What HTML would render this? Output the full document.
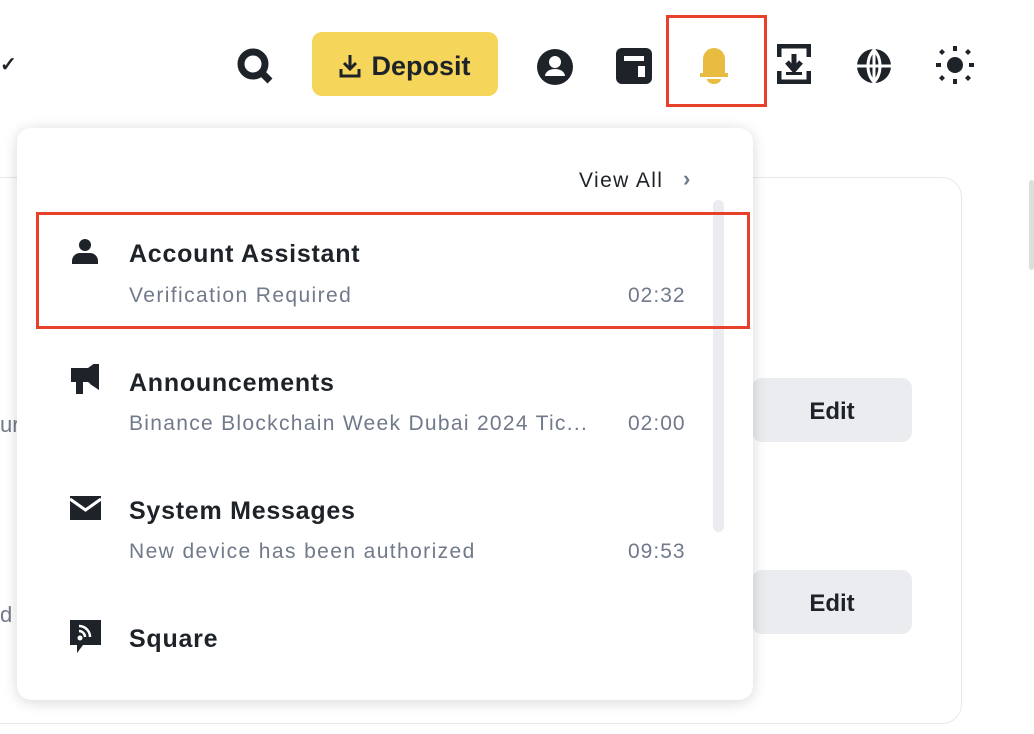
<!DOCTYPE html>
<html><head><style>
body{margin:0;width:1034px;height:734px;background:#fff;position:relative;overflow:hidden;font-family:"Liberation Sans",sans-serif;color:#1e2329}
.abs{position:absolute}
.card{left:-20px;top:177px;width:980px;height:545px;border:1.5px solid #e6e8ea;border-radius:20px}
.edit{left:752px;width:160px;height:64px;background:#eaecef;border-radius:10px;font-size:24px;font-weight:bold;display:flex;align-items:center;justify-content:center;padding-top:4px;box-sizing:border-box}
.dd{left:17px;top:128px;width:736px;height:572px;background:#fff;border-radius:14px;box-shadow:0 2px 14px rgba(0,0,0,.16)}
.t{font-size:25px;font-weight:bold;left:129px;letter-spacing:.75px;top:2px}
.s{font-size:21px;color:#707a8a;left:129px;letter-spacing:1.4px}
.tm{font-size:21px;color:#707a8a;left:628px;letter-spacing:1px}
</style></head><body>
<div class="abs" style="left:0;top:52px;font-size:20px;font-weight:bold">✓</div>
<div class="abs card"></div>
<div class="abs" style="left:0;top:412px;font-size:22px;color:#707a8a">ur</div>
<div class="abs" style="left:0;top:602px;font-size:22px;color:#707a8a">d</div>
<div class="abs edit" style="top:378px">Edit</div>
<div class="abs edit" style="top:570px">Edit</div>
<div class="abs" style="left:1029px;top:180px;width:5px;height:90px;background:#ddd;border-radius:3px"></div>

<!-- top bar -->
<svg class="abs" style="left:236px;top:47px" width="40" height="40" viewBox="0 0 40 40"><circle cx="17" cy="17" r="12" fill="none" stroke="#1e2329" stroke-width="7"/><path d="M25 25l9 9" stroke="#1e2329" stroke-width="7"/></svg>
<div class="abs" style="left:312px;top:32px;width:186px;height:64px;background:#f5d55a;border-radius:10px;font-size:27px;font-weight:bold;display:flex;align-items:center;justify-content:center;gap:10px;padding-top:4px;box-sizing:border-box">
<svg width="22" height="24" viewBox="0 0 22 24"><path d="M11 1v13M5 9l6 6 6-6" stroke="#1e2329" stroke-width="3" fill="none"/><path d="M2 15v7h18v-7" stroke="#1e2329" stroke-width="3" fill="none"/></svg>Deposit</div>
<svg class="abs" style="left:536px;top:48px" width="38" height="38" viewBox="0 0 38 38"><circle cx="19" cy="19" r="18" fill="#1e2329"/><circle cx="19" cy="14" r="6" fill="#fff"/><path d="M9 28a10 7 0 0 1 20 0z" fill="#fff"/></svg>
<svg class="abs" style="left:616px;top:48px" width="36" height="36" viewBox="0 0 36 36"><rect x="0" y="0" width="36" height="36" rx="6" fill="#1e2329"/><rect x="8" y="8" width="20" height="5" fill="#fff"/><rect x="22" y="18" width="7" height="11" fill="#fff"/></svg>
<div class="abs" style="left:666px;top:15px;width:101px;height:92px;border:3px solid #e8412b;box-sizing:border-box"></div>
<svg class="abs" style="left:696px;top:45px" width="36" height="40" viewBox="0 0 36 40"><path d="M7 28V14a11 11 0 0 1 22 0v14h3v4H4v-4z" fill="#e8bc41"/><path d="M11 34h14a7 5 0 0 1-14 0z" fill="#e8bc41"/></svg>
<svg class="abs" style="left:777px;top:44px" width="34" height="40" viewBox="0 0 34 40"><path d="M2 13V2h30v11M2 27v11h30V27" stroke="#1e2329" stroke-width="5" fill="none"/><path d="M17 10v14M10 18l7 8 7-8" stroke="#1e2329" stroke-width="5" fill="none"/><rect x="9" y="28" width="16" height="3" fill="#1e2329"/></svg>
<svg class="abs" style="left:855px;top:47px" width="38" height="38" viewBox="0 0 38 38"><circle cx="19" cy="19" r="17" fill="#1e2329"/><path d="M19 2v34M2 19h34M19 3c-8 8-8 24 0 32M19 3c8 8 8 24 0 32" stroke="#fff" stroke-width="3" fill="none"/></svg>
<svg class="abs" style="left:935px;top:45px" width="40" height="40" viewBox="0 0 40 40"><circle cx="20" cy="20" r="8" fill="#1e2329"/><g fill="#1e2329"><rect x="18" y="1" width="4" height="5"/><rect x="18" y="34" width="4" height="5"/><rect x="1" y="18" width="5" height="4"/><rect x="34" y="18" width="5" height="4"/><path d="M7 4l3 3-3 3-3-3zM33 4l3 3-3 3-3-3zM7 30l3 3-3 3-3-3zM33 30l3 3-3 3-3-3z"/></g></svg>

<!-- dropdown -->
<div class="abs dd"></div>
<div class="abs" style="left:579px;top:169px;font-size:21px;letter-spacing:1.4px">View All</div>
<div class="abs" style="left:683px;top:166px;font-size:22px;color:#707a8a;font-weight:bold">›</div>
<div class="abs" style="left:713px;top:200px;width:11px;height:332px;background:#eaecef;border-radius:6px"></div>
<div class="abs" style="left:36px;top:212px;width:714px;height:117px;border:3px solid #e8412b;box-sizing:border-box"></div>

<svg class="abs" style="left:71px;top:237px" width="28" height="28" viewBox="0 0 28 28"><circle cx="14" cy="8" r="6" fill="#1e2329"/><path d="M1 27v-3a8 8 0 0 1 8-8h10a8 8 0 0 1 8 8v3z" fill="#1e2329"/></svg>
<div class="abs t" style="top:240px">Account Assistant</div>
<div class="abs s" style="top:284px">Verification Required</div>
<div class="abs tm" style="top:284px">02:32</div>

<svg class="abs" style="left:70px;top:364px" width="30" height="32" viewBox="0 0 30 32"><path d="M1 4h17l11-8v0L29 26 18 18h-5v12H6V18H1z" fill="#1e2329"/><path d="M20 6l9-6v26l-9-6z" fill="#1e2329"/></svg>
<div class="abs t" style="top:369px">Announcements</div>
<div class="abs s" style="top:412px;letter-spacing:1.3px">Binance Blockchain Week Dubai 2024 Tic...</div>
<div class="abs tm" style="top:412px">02:00</div>

<svg class="abs" style="left:70px;top:496px" width="31" height="24" viewBox="0 0 31 24"><rect width="31" height="24" fill="#1e2329"/><path d="M0 3l15.5 11L31 3" stroke="#fff" stroke-width="3" fill="none"/></svg>
<div class="abs t" style="top:497px">System Messages</div>
<div class="abs s" style="top:540px">New device has been authorized</div>
<div class="abs tm" style="top:540px">09:53</div>

<svg class="abs" style="left:70px;top:620px" width="31" height="34" viewBox="0 0 31 34"><path d="M0 0h31v25H13l-6 8v-8H0z" fill="#1e2329"/><circle cx="10" cy="18" r="2.5" fill="#fff"/><path d="M9 11a6 6 0 0 1 6 6M9 6a11 11 0 0 1 11 11" stroke="#fff" stroke-width="2.5" fill="none"/></svg>
<div class="abs t" style="top:625px">Square</div>
</body></html>
